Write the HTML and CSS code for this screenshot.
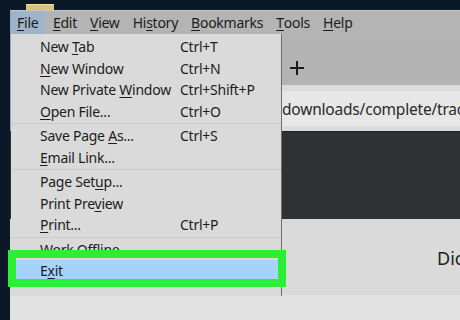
FILE: index.html
```html
<!DOCTYPE html>
<html>
<head>
<meta charset="utf-8">
<link rel="stylesheet" href="styles.css">
</head>
<body>
<div class="desktop">
  <div class="folder"></div>
  <div class="window">
    <div class="menubar">
      <span class="mb-item active"><u>F</u>ile</span>
      <span class="mb-item"><u>E</u>dit</span>
      <span class="mb-item"><u>V</u>iew</span>
      <span class="mb-item">Hi<u>s</u>tory</span>
      <span class="mb-item"><u>B</u>ookmarks</span>
      <span class="mb-item"><u>T</u>ools</span>
      <span class="mb-item"><u>H</u>elp</span>
    </div>
    <div class="tabbar">
      <div class="tabstrip">
        <svg class="plus" width="14" height="14" viewBox="0 0 14 14"><path d="M7 0V14M0 7H14" stroke="#1a1a1a" stroke-width="2"/></svg>
      </div>
    </div>
    <div class="urlrow">
      <div class="urlfield">downloads/complete/tracker</div>
    </div>
    <div class="dark"></div>
    <div class="content"><span class="dic">Dic</span></div>
    <div class="footer"></div>
  </div>

  <div class="dropdown">
    <div class="row"><span class="label">New <u>T</u>ab</span><span class="key">Ctrl+T</span></div>
    <div class="row"><span class="label"><u>N</u>ew Window</span><span class="key">Ctrl+N</span></div>
    <div class="row"><span class="label">New Private <u>W</u>indow</span><span class="key">Ctrl+Shift+P</span></div>
    <div class="row"><span class="label"><u>O</u>pen File...</span><span class="key">Ctrl+O</span></div>
    <div class="sep"></div>
    <div class="row"><span class="label">Save Page <u>A</u>s...</span><span class="key">Ctrl+S</span></div>
    <div class="row"><span class="label"><u>E</u>mail Link...</span><span class="key"></span></div>
    <div class="sep"></div>
    <div class="row"><span class="label">Page Set<u>u</u>p...</span><span class="key"></span></div>
    <div class="row"><span class="label">Print Pre<u>v</u>iew</span><span class="key"></span></div>
    <div class="row"><span class="label"><u>P</u>rint...</span><span class="key">Ctrl+P</span></div>
    <div class="sep"></div>
    <div class="row"><span class="label">Wor<u>k</u> Offline</span><span class="key"></span></div>
    <div class="row hover"><span class="label">E<u>x</u>it</span><span class="key"></span></div>
  </div>
  <div class="callout"></div>
</div>
</body>
</html>
```

FILE: styles.css
```css
html, body {
  margin: 0;
  padding: 0;
}
body {
  background: #0b1828;
  font-family: "Noto Sans", "Open Sans", sans-serif;
  color: #1b1b1b;
}
u {
  text-decoration: underline;
  text-underline-offset: 2px;
  text-decoration-thickness: 1px;
}
.desktop {
  position: relative;
  width: 460px;
  height: 320px;
  overflow: hidden;
  background: #0b1828;
}
.folder {
  position: absolute;
  left: 26px;
  top: 4px;
  width: 28px;
  height: 6px;
  background: #d8c27c;
  border-top: 1px solid #ece0a8;
  box-sizing: border-box;
}
.window {
  margin-left: 10px;
  padding-top: 10px;
  width: 450px;
  height: 310px;
  display: flex;
  flex-direction: column;
}
.menubar {
  height: 24px;
  background: #b4b4b4;
  border-left: 1px solid #8fa7bd;
  border-top: 1px solid #c6c6c6;
  box-sizing: border-box;
  display: flex;
  align-items: stretch;
  font-size: 14px;
  letter-spacing: -0.25px;
  white-space: nowrap;
}
.mb-item {
  display: flex;
  align-items: center;
  padding: 0 6.5px;
  color: #1c1c1c;
}
.mb-item.active {
  background: #9fb4c9;
  padding: 0 7px 0 6px;
  margin-right: 1px;
}
.tabbar {
  height: 51px;
  background: #dcdcdc;
  border-left: 1px solid #8fa7bd;
  box-sizing: border-box;
}
.tabstrip {
  height: 100%;
  background: #b3b3b3;
  border-bottom-left-radius: 10px;
  display: flex;
  align-items: center;
  padding-left: 279px;
  padding-top: 16px;
  box-sizing: border-box;
}
.urlrow {
  height: 46px;
  background: #dcdcdc;
  border-left: 1px solid #8fa7bd;
  box-sizing: border-box;
  padding: 6px 0 5px 0;
  display: flex;
}
.urlfield {
  flex: 1;
  background: #e7e7e7;
  display: flex;
  align-items: center;
  padding-left: 271px;
  font-size: 15.5px;
  letter-spacing: -0.2px;
  color: #2a2a2a;
  white-space: nowrap;
  overflow: hidden;
}
.dark {
  height: 88px;
  background: #2f3335;
  border-top: 1px solid #222;
  box-sizing: border-box;
}
.content {
  height: 76px;
  background: #dadada;
  display: flex;
  align-items: center;
  padding-left: 427px;
  box-sizing: border-box;
  font-size: 18px;
  color: #1f1f1f;
  overflow: hidden;
  white-space: nowrap;
}
.dic {
  padding-top: 2px;
}
.footer {
  flex: 1;
  background: #e2e2e2;
}
.dropdown {
  position: absolute;
  left: 11px;
  top: 34px;
  width: 271px;
  height: 262px;
  background: #dadada;
  border-right: 1px solid #6e6e6e;
  box-sizing: border-box;
  padding-top: 2px;
  font-size: 14px;
  letter-spacing: -0.25px;
}
.row {
  height: 21.5px;
  display: flex;
  align-items: center;
  padding-left: 29px;
  color: #1c1c1c;
  white-space: nowrap;
}
.row .label {
  width: 140px;
  flex: none;
}
.row.hover {
  background: #a7d3f8;
}
.sep {
  height: 1px;
  margin: 1px 0 1px 0;
  background: #cacaca;
}
.callout {
  position: absolute;
  left: 8px;
  top: 250px;
  width: 278px;
  height: 37px;
  border: 8px solid #2cee35;
  box-sizing: border-box;
}
```
